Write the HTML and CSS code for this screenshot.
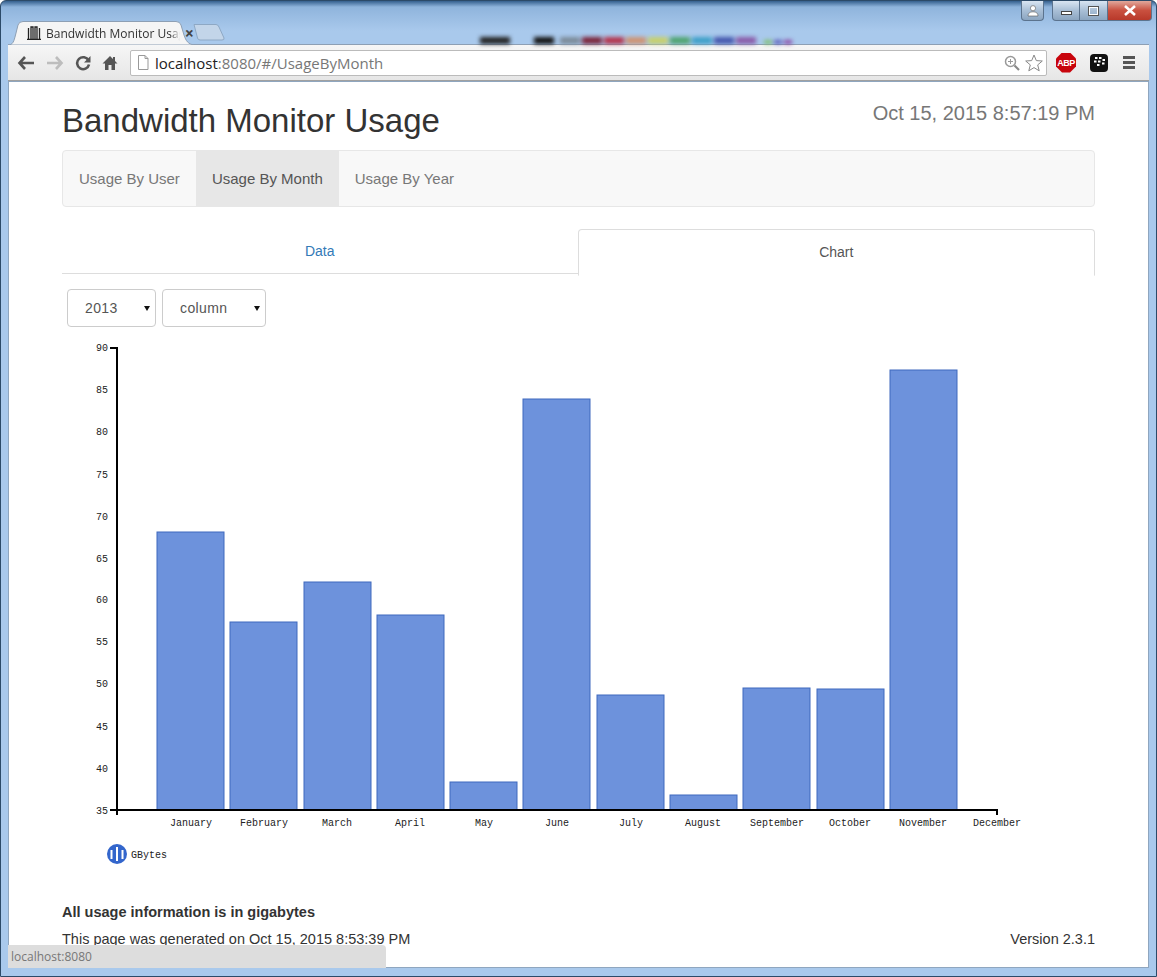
FILE: index.html
```html
<!DOCTYPE html>
<html>
<head>
  <title>Bandwidth Monitor Usage</title>
  <link rel="stylesheet" href="styles.css">
</head>
<body>
  <div class="window">
    <div class="caption">
      <button class="cap-btn cap-user">
        <svg width="12" height="12" viewBox="0 0 12 12"><circle cx="6" cy="3.2" r="2.6" fill="#fff" stroke="#555" stroke-width=".6"/><path d="M1 11 Q1 6.8 6 6.8 Q11 6.8 11 11 Z" fill="#fff" stroke="#555" stroke-width=".6"/></svg>
      </button>
      <div class="cap-group">
        <button class="cap-btn cap-min"><span class="min-bar"></span></button>
        <button class="cap-btn cap-max"><span class="max-box"></span></button>
        <button class="cap-btn cap-close">
          <svg width="14" height="11" viewBox="0 0 14 11"><path d="M2 1 L12 10 M12 1 L2 10" stroke="#fff" stroke-width="2.6"/></svg>
        </button>
      </div>
    </div>

    <div class="tabstrip">
      <div class="tab">
        <svg class="tab-shape" width="186" height="24" viewBox="0 0 186 24"><path d="M0 24 C5 24 6 20 7.500 14 L10 4 Q11 .5 15 .5 L168 .5 Q172 .5 173 4 L176 14 C178 20 180 23 186 24 Z" fill="#f5f5f5" stroke="#8d9fb4"/></svg>
        <svg class="tab-icon" width="14" height="14" viewBox="0 0 14 14"><path d="M0 13.500 H14 M1.500 13 V2 M4 13 V1 H6 V13 M8 13 V1 H10 V13 M12.500 13 V2" stroke="#222" stroke-width="1.300" fill="none"/></svg>
        <span class="tab-title">Bandwidth Monitor Usage</span>
        <span class="tab-close">×</span>
      </div>
      <svg class="newtab" width="32" height="17" viewBox="0 0 32 17"><path d="M1 .5 H23 Q25 .5 26 3 L31 14 Q31.500 16 29 16 H7 Q5 16 4.500 14 Z" fill="#c3d5e9" stroke="#8ea8c4"/></svg>
      <div class="blobs">
        <i class="b1"></i><i class="b2"></i><i class="b3"></i><i class="b4"></i><i class="b5"></i><i class="b6"></i><i class="b7"></i><i class="b8"></i><i class="b9"></i><i class="b10"></i><i class="b11"></i><i class="b12"></i><i class="b13"></i><i class="b14"></i>
      </div>
    </div>

    <div class="toolbar">
      <svg class="tool" width="18" height="16" viewBox="0 0 18 16"><path d="M8 2 L2.500 8 L8 14 M3 8 H17" fill="none" stroke="#555" stroke-width="2.600"/></svg>
      <svg class="tool" width="18" height="16" viewBox="0 0 18 16"><path d="M10 2 L15.500 8 L10 14 M15 8 H1" fill="none" stroke="#bdbdbd" stroke-width="2.600"/></svg>
      <svg class="tool" width="16" height="16" viewBox="0 0 16 16"><path d="M13.500 5.500 A6 6 0 1 0 14 9.500" fill="none" stroke="#555" stroke-width="2.600"/><path d="M15.500 1 V7.500 H9 Z" fill="#555"/></svg>
      <svg class="tool" width="16" height="16" viewBox="0 0 16 16"><path d="M8 1 L0.500 8.500 H3 V15 H6.500 V10 H9.500 V15 H13 V8.500 H15.500 L13 6 V2 H11 V4 Z" fill="#555"/></svg>
      <div class="omnibox">
        <svg class="page-icon" width="12" height="15" viewBox="0 0 12 15"><path d="M1.500 .5 H8 L11 3.500 V14.500 H1.500 Z M8 .5 V3.500 H11" fill="#fff" stroke="#999"/></svg>
        <span class="url"><b>localhost</b>:8080/#/UsageByMonth</span>
        <svg class="zoom-icon" width="16" height="16" viewBox="0 0 16 16"><circle cx="6.500" cy="6.500" r="5" fill="none" stroke="#999" stroke-width="1.500"/><path d="M6.500 4 V9 M4 6.500 H9" stroke="#999"/><path d="M10.500 10.500 L15 15" stroke="#888" stroke-width="2.200"/></svg>
        <svg width="18" height="18" viewBox="0 0 18 18"><path d="M9 1 L11.300 6.600 L17.300 7 L12.700 10.900 L14.200 16.800 L9 13.600 L3.800 16.800 L5.300 10.900 L.7 7 L6.700 6.600 Z" fill="#fff" stroke="#888"/></svg>
      </div>
      <div class="abp">ABP</div>
      <div class="bb">
        <svg width="12" height="11" viewBox="0 0 12 11" fill="#fff"><rect x="2" y="0" width="2.500" height="2"/><rect x="6" y="0" width="2.500" height="2"/><rect x="1" y="3.500" width="2.500" height="2"/><rect x="5" y="3.500" width="2.500" height="2"/><rect x="9.500" y="2" width="2.500" height="2"/><rect x="4" y="7" width="2.500" height="2"/><rect x="9" y="5.500" width="2.500" height="2"/></svg>
      </div>
      <div class="menu"><i></i><i></i><i></i></div>
    </div>

    <div class="page">
      <div class="container">
        <div class="header">
          <h1>Bandwidth Monitor Usage</h1>
          <div class="clock">Oct 15, 2015 8:57:19 PM</div>
        </div>

        <div class="navbar">
          <a class="nav-link">Usage By User</a>
          <a class="nav-link active">Usage By Month</a>
          <a class="nav-link">Usage By Year</a>
        </div>

        <div class="tabs">
          <a class="tab-link">Data</a>
          <a class="tab-link active">Chart</a>
        </div>

        <div class="filters">
          <div class="select year"><span>2013</span></div>
          <div class="select kind"><span>column</span></div>
        </div>

        <svg class="chart" width="1033" height="535" viewBox="62 335 1033 535">
          <g class="bars">
            <rect x="157" y="532" width="67" height="278"/>
            <rect x="230" y="622" width="67" height="188"/>
            <rect x="304" y="582" width="67" height="228"/>
            <rect x="377" y="615" width="67" height="195"/>
            <rect x="450" y="782" width="67" height="28"/>
            <rect x="523" y="399" width="67" height="411"/>
            <rect x="597" y="695" width="67" height="115"/>
            <rect x="670" y="795" width="67" height="15"/>
            <rect x="743" y="688" width="67" height="122"/>
            <rect x="817" y="689" width="67" height="121"/>
            <rect x="890" y="370" width="67" height="440"/>
          </g>
          <path class="axis" d="M110 348 H117 V815 M110 810 H997 V815"/>
          <g class="y-labels">
            <text x="108" y="351">90</text>
            <text x="108" y="393">85</text>
            <text x="108" y="435">80</text>
            <text x="108" y="478">75</text>
            <text x="108" y="520">70</text>
            <text x="108" y="562">65</text>
            <text x="108" y="603">60</text>
            <text x="108" y="645">55</text>
            <text x="108" y="687">50</text>
            <text x="108" y="730">45</text>
            <text x="108" y="772">40</text>
            <text x="108" y="814">35</text>
          </g>
          <g class="x-labels">
            <text x="191" y="826">January</text>
            <text x="264" y="826">February</text>
            <text x="337" y="826">March</text>
            <text x="410" y="826">April</text>
            <text x="484" y="826">May</text>
            <text x="557" y="826">June</text>
            <text x="631" y="826">July</text>
            <text x="703" y="826">August</text>
            <text x="777" y="826">September</text>
            <text x="850" y="826">October</text>
            <text x="923" y="826">November</text>
            <text x="997" y="826">December</text>
          </g>
          <circle cx="117" cy="854" r="10" fill="#3366cc"/>
          <path d="M111.500 850 V859 M117 847 V861 M122.500 850 V859" stroke="#fff" stroke-width="2"/>
          <text class="legend" x="131" y="858">GBytes</text>
        </svg>

        <div class="footer">
          <div class="note">All usage information is in gigabytes</div>
          <div class="footer-row">
            <span>This page was generated on Oct 15, 2015 8:53:39 PM</span>
            <span>Version 2.3.1</span>
          </div>
        </div>
      </div>
      <div class="status">localhost:8080</div>
    </div>
  </div>
</body>
</html>
```

FILE: styles.css
```css
html, body {
  margin: 0;
  height: 977px;
  overflow: hidden;
}

body {
  font-family: "Liberation Sans", Arial, sans-serif;
  color: #333;
  background-color: #fff;
}

.window {
  position: relative;
  height: 977px;
  box-sizing: border-box;
  padding: 0 7px 8px 7px;
  display: flex;
  flex-direction: column;
  border: 1px solid #2c4a68;
  border-bottom-width: 1px;
  border-radius: 6px 6px 0 0;
  background: linear-gradient(to bottom, #35608e 0, #8fb4dc 6px, #a9c9ec 30px, #a9c9ec 100%);
}

/* window buttons */
.caption {
  position: absolute;
  top: 0;
  right: 4px;
  display: flex;
  gap: 8px;
}

.cap-btn {
  height: 20px;
  padding: 0;
  border: 1px solid #5b738e;
  border-top: none;
  display: flex;
  align-items: center;
  justify-content: center;
  background: linear-gradient(to bottom, #d9e5f2, #a9bfd6 50%, #8ba5c0);
}

.cap-user {
  width: 23px;
  border-radius: 0 0 4px 4px;
}

.cap-group {
  display: flex;
}

.cap-min {
  width: 28px;
  border-radius: 0 0 0 4px;
}

.min-bar {
  display: block;
  width: 11px;
  height: 4px;
  margin-top: 5px;
  background: #fff;
  border: 1px solid #444;
  box-sizing: border-box;
}

.cap-max {
  width: 28px;
  border-left: none;
}

.max-box {
  display: block;
  width: 11px;
  height: 10px;
  box-sizing: border-box;
  border: 2px solid #fff;
  outline: 1px solid #555;
  outline-offset: -1px;
}

.cap-close {
  width: 44px;
  border-left: none;
  border-radius: 0 0 4px 0;
  background: linear-gradient(to bottom, #e0a89c, #c9503f 50%, #b8392a);
}

/* tab strip */
.tabstrip {
  height: 43px;
  display: flex;
  align-items: flex-end;
}

.tab {
  position: relative;
  width: 186px;
  height: 24px;
  display: flex;
  align-items: center;
  font-family: "Open Sans", sans-serif;
  font-size: 12px;
  color: #333;
  margin-bottom: -1px;
}

.tab-shape {
  position: absolute;
  left: 0;
  top: 0;
}

.tab-icon {
  position: relative;
  margin-left: 19px;
  flex: none;
}

.tab-title {
  position: relative;
  margin-left: 5px;
  width: 138px;
  overflow: hidden;
  white-space: nowrap;
  -webkit-mask-image: linear-gradient(to right, #000 125px, transparent);
  mask-image: linear-gradient(to right, #000 125px, transparent);
}

.tab-close {
  position: relative;
  margin-left: 5px;
  font-size: 16px;
  font-weight: bold;
  color: #444;
}

.newtab {
  margin: 0 0 3px -1px;
}

.blobs {
  display: flex;
  gap: 2px;
  margin-left: 255px;
  filter: blur(2px);
}

.blobs i {
  display: block;
  width: 20px;
  height: 7px;
}

.blobs .b1 { background: #222; width: 30px; margin-right: 22px; }
.blobs .b2 { background: #111; margin-right: 4px; }
.blobs .b3 { background: #7b8a98; }
.blobs .b4 { background: #7b2238; }
.blobs .b5 { background: #b5324a; }
.blobs .b6 { background: #cf9270; }
.blobs .b7 { background: #c8d06a; }
.blobs .b8 { background: #4ea36e; }
.blobs .b9 { background: #3d9fc8; }
.blobs .b10 { background: #4456ad; }
.blobs .b11 { background: #8a5aa8; margin-right: 6px; }
.blobs .b12 { background: #7fbf6a; width: 8px; height: 4px; margin-top: 3px; }
.blobs .b13 { background: #5a58b8; width: 8px; height: 4px; margin-top: 3px; }
.blobs .b14 { background: #8a3fa0; width: 8px; height: 4px; margin-top: 3px; }

/* browser toolbar */
.toolbar {
  height: 37px;
  box-sizing: border-box;
  display: flex;
  align-items: center;
  padding-left: 9px;
  border-top: 1px solid #8d9fb4;
  border-bottom: 1px solid #a0a0a0;
  background: linear-gradient(to bottom, #f6f6f6, #e6e6e6);
}

.tool {
  margin-right: 11px;
  flex: none;
}

.omnibox {
  width: 917px;
  height: 26px;
  margin-left: 1px;
  box-sizing: border-box;
  display: flex;
  align-items: center;
  padding: 0 3px 0 6px;
  background: #fff;
  border: 1px solid #bbb;
  border-radius: 2px;
  flex: none;
}

.url {
  flex: 1;
  margin-left: 6px;
  font-family: "Open Sans", sans-serif;
  font-size: 15px;
  color: #777;
}

.url b {
  font-weight: normal;
  color: #222;
}

.zoom-icon {
  margin-right: 5px;
}

.abp {
  width: 20px;
  height: 20px;
  margin-left: 9px;
  clip-path: polygon(30% 0, 70% 0, 100% 30%, 100% 70%, 70% 100%, 30% 100%, 0 70%, 0 30%);
  background: #c8050d;
  color: #fff;
  font-size: 9px;
  font-weight: bold;
  line-height: 20px;
  text-align: center;
  letter-spacing: -.5px;
}

.bb {
  width: 18px;
  height: 18px;
  margin-left: 14px;
  border-radius: 4px;
  background: #111;
  display: flex;
  align-items: center;
  justify-content: center;
}

.menu {
  width: 12px;
  margin-left: 15px;
  display: flex;
  flex-direction: column;
  gap: 2px;
}

.menu i {
  display: block;
  height: 3px;
  background: #555;
}

/* the page */
.page {
  position: relative;
  flex: 1;
  background: #fff;
  overflow: hidden;
  padding: 0 54px;
  box-shadow: inset 0 0 0 1px #8fa6bf;
}

.container {
  width: 1033px;
}

.header {
  display: flex;
  justify-content: space-between;
  height: 69px;
}

h1 {
  margin: 20px 0 0;
  font-size: 33px;
  font-weight: 500;
  line-height: 39px;
  color: #333;
}

.clock {
  margin-top: 20px;
  font-size: 20px;
  line-height: 24px;
  color: #777;
}

.navbar {
  height: 57px;
  box-sizing: border-box;
  display: flex;
  background: #f8f8f8;
  border: 1px solid #e7e7e7;
  border-radius: 4px;
}

.nav-link {
  padding: 0 16px;
  font-size: 15px;
  line-height: 55px;
  color: #777;
}

.nav-link.active {
  background: #e7e7e7;
  color: #555;
}

.tabs {
  display: flex;
  margin-top: 22px;
  height: 45px;
  box-sizing: border-box;
  border-bottom: 1px solid #ddd;
}

.tab-link {
  flex: 1;
  text-align: center;
  font-size: 14px;
  line-height: 45px;
  color: #337ab7;
}

.tab-link.active {
  height: 45px;
  color: #555;
  background: #fff;
  border: 1px solid #ddd;
  border-bottom-color: #fff;
  border-radius: 4px 4px 0 0;
}

.filters {
  display: flex;
  gap: 6px;
  padding: 15px 0 0 5px;
}

.select {
  position: relative;
  height: 38px;
  box-sizing: border-box;
  border: 1px solid #ccc;
  border-radius: 4px;
  font-size: 14px;
  letter-spacing: .4px;
  line-height: 36px;
  color: #555;
}

.select span {
  padding-left: 17px;
}

.select::after {
  content: "";
  position: absolute;
  right: 5px;
  top: 16px;
  border-top: 5px solid #111;
  border-left: 3px solid transparent;
  border-right: 3px solid transparent;
}

.year {
  width: 89px;
}

.kind {
  width: 104px;
}

/* chart */
.chart {
  display: block;
  margin-top: 8px;
}

.chart text {
  font-family: "Liberation Mono", monospace;
  font-size: 10px;
  fill: #222;
}

.bars rect {
  fill: #6d92dc;
  stroke: #3f69bd;
  stroke-width: 1;
}

.axis {
  fill: none;
  stroke: #000;
  stroke-width: 2;
}

.y-labels text {
  text-anchor: end;
}

.x-labels text {
  text-anchor: middle;
}

/* footer */
.footer {
  margin-top: 32px;
  font-size: 14.500px;
}

.note {
  font-weight: bold;
  line-height: 20px;
}

.footer-row {
  display: flex;
  justify-content: space-between;
  margin-top: 7px;
  line-height: 20px;
}

/* link hover bubble */
.status {
  position: absolute;
  left: 0;
  bottom: 0;
  width: 378px;
  height: 23px;
  padding-left: 3px;
  box-sizing: border-box;
  background: #ddd;
  border-radius: 0 4px 0 0;
  font-family: "Open Sans", sans-serif;
  font-size: 12px;
  line-height: 23px;
  color: #777;
}
```
